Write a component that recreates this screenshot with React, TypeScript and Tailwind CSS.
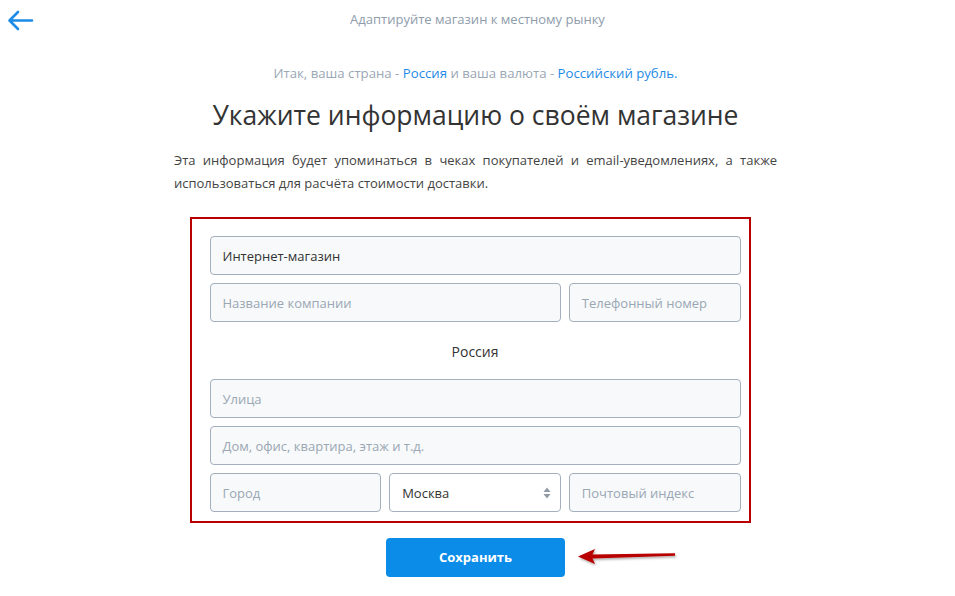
import React from "react";

const font = { fontFamily: '"Open Sans", "Noto Sans", Arial, sans-serif' };

function Field({ placeholder, value, className = "" }: { placeholder?: string; value?: string; className?: string }) {
  return (
    <div
      className={`h-[39px] rounded-[4px] border border-[#a3afbc] bg-[#f7f9fa] flex items-center px-[12px] pt-[3px] text-[13px] ${className}`}
    >
      {value ? <span className="text-[#333333]">{value}</span> : <span className="text-[#9aa7b4]">{placeholder}</span>}
    </div>
  );
}

export default function App() {
  return (
    <div className="w-[955px] h-[596px] bg-white relative overflow-hidden" style={font}>
      <div className="h-[40px] flex items-center relative">
        <svg className="absolute left-[7px] top-[10px]" width="27" height="21" viewBox="0 0 27 21" fill="none">
          <path d="M25 10.5H3M11 2L2.5 10.5L11 19" stroke="#1e8be6" strokeWidth="2.6" strokeLinecap="round" strokeLinejoin="round" />
        </svg>
        <div className="w-full text-center text-[13px] text-[#8e9cab] mt-[-1px]">Адаптируйте магазин к местному рынку</div>
      </div>

      <div className="ml-[174px] w-[603px] flex flex-col items-center">
        <div className="mt-[23px] text-[13.2px] text-[#9aa7b4] leading-[20px]">
          Итак, ваша страна - <span className="text-[#1e8be6]">Россия</span> и ваша валюта -{" "}
          <span className="text-[#1e8be6]">Российский рубль.</span>
        </div>
        <h1 className="mt-[14px] text-[26.5px] leading-[36px] text-[#333333] font-normal">Укажите информацию о своём магазине</h1>
        <p className="mt-[16px] w-full text-[13px] leading-[23px] text-[#444444] text-justify">
          Эта информация будет упоминаться в чеках покупателей и email-уведомлениях, а также использоваться для расчёта стоимости доставки.
        </p>

        <div className="mt-[22px] w-[561px] mr-[11px] border-2 border-[#b90000] pt-[17px] pb-[9px] pl-[18px] pr-[8px]">
          <div className="grid grid-cols-3 gap-x-[8px] gap-y-[8px] w-[531px]">
            <Field className="col-span-3" value="Интернет-магазин" />
            <Field className="col-span-2" placeholder="Название компании" />
            <Field placeholder="Телефонный номер" />
            <div className="col-span-3 h-[41px] flex items-center justify-center pt-[2px] text-[14px] text-[#333333]">Россия</div>
            <Field className="col-span-3" placeholder="Улица" />
            <Field className="col-span-3" placeholder="Дом, офис, квартира, этаж и т.д." />
            <Field placeholder="Город" />
            <div className="h-[39px] rounded-[4px] border border-[#a3afbc] bg-white flex items-center justify-between pl-[12px] pr-[9px] text-[13px] text-[#333333]">
              <span className="pt-[3px]">Москва</span>
              <svg width="8" height="12" viewBox="0 0 8 12">
                <path d="M4 0.5L7.5 5H0.5Z" fill="#8f9aa5" />
                <path d="M4 11.5L7.5 7H0.5Z" fill="#8f9aa5" />
              </svg>
            </div>
            <Field placeholder="Почтовый индекс" />
          </div>
        </div>

        <div className="relative mt-[15px]">
          <button className="w-[179px] h-[39px] rounded-[4px] bg-[#0b8ce9] text-white text-[13px] font-bold">Сохранить</button>
          <svg className="absolute left-[189px] top-[6px]" width="106" height="24" viewBox="0 0 106 24">
            <defs>
              <filter id="sh" x="-10%" y="-50%" width="120%" height="200%">
                <feDropShadow dx="1" dy="1.5" stdDeviation="1" floodColor="#000" floodOpacity="0.35" />
              </filter>
            </defs>
            <path d="M3 12.5 L20 5 L17.5 10.5 L100 9.3 L100 11.8 L17.5 14.5 L20 20 Z" fill="#b80000" filter="url(#sh)" />
          </svg>
        </div>
      </div>
    </div>
  );
}
